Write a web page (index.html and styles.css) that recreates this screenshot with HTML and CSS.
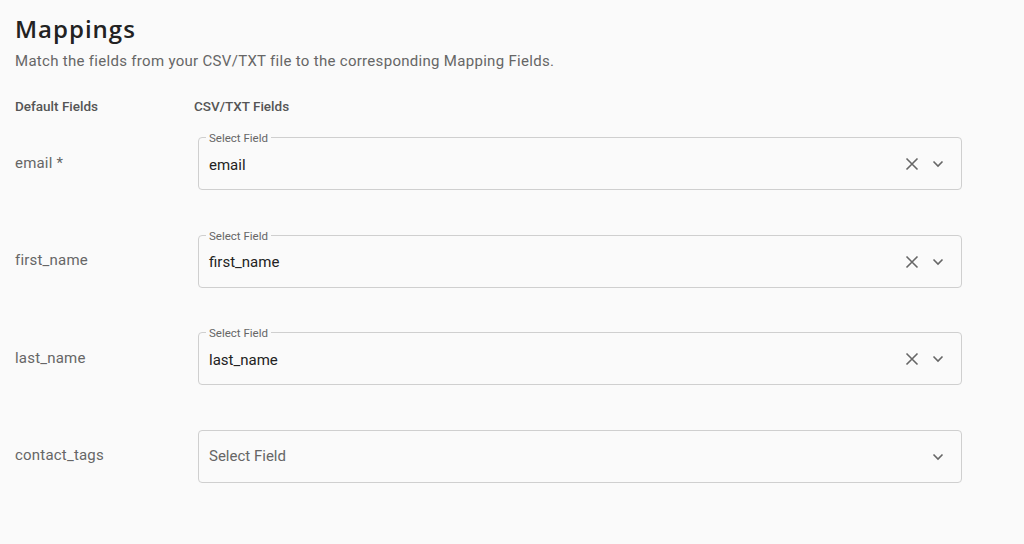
FILE: index.html
```html
<!DOCTYPE html>
<html>
<head>
<meta charset="utf-8">
<link rel="stylesheet" href="styles.css">
</head>
<body>
<div class="page">
  <h1 class="title">Mappings</h1>
  <p class="subtitle">Match the fields from your CSV/TXT file to the corresponding Mapping Fields.</p>
  <div class="heads">
    <div class="head">Default Fields</div>
    <div class="head">CSV/TXT Fields</div>
  </div>
  <div class="grid">
    <div class="label">email *</div>
    <div class="select">
      <span class="legend">Select Field</span>
      <span class="value">email</span>
      <svg class="clear" width="14" height="14" viewBox="0 0 14 14"><path d="M1.5 1.5 L12.5 12.5 M12.5 1.5 L1.5 12.5" stroke="#666" stroke-width="1.6" fill="none"/></svg>
      <svg class="chev" width="12" height="8" viewBox="0 0 12 8"><path d="M1.5 1.5 L6 6 L10.5 1.5" stroke="#666" stroke-width="1.6" fill="none"/></svg>
    </div>

    <div class="label">first_name</div>
    <div class="select">
      <span class="legend">Select Field</span>
      <span class="value">first_name</span>
      <svg class="clear" width="14" height="14" viewBox="0 0 14 14"><path d="M1.5 1.5 L12.5 12.5 M12.5 1.5 L1.5 12.5" stroke="#666" stroke-width="1.6" fill="none"/></svg>
      <svg class="chev" width="12" height="8" viewBox="0 0 12 8"><path d="M1.5 1.5 L6 6 L10.5 1.5" stroke="#666" stroke-width="1.6" fill="none"/></svg>
    </div>

    <div class="label">last_name</div>
    <div class="select">
      <span class="legend">Select Field</span>
      <span class="value">last_name</span>
      <svg class="clear" width="14" height="14" viewBox="0 0 14 14"><path d="M1.5 1.5 L12.5 12.5 M12.5 1.5 L1.5 12.5" stroke="#666" stroke-width="1.6" fill="none"/></svg>
      <svg class="chev" width="12" height="8" viewBox="0 0 12 8"><path d="M1.5 1.5 L6 6 L10.5 1.5" stroke="#666" stroke-width="1.6" fill="none"/></svg>
    </div>

    <div class="label">contact_tags</div>
    <div class="select">
      <span class="value placeholder">Select Field</span>
      <svg class="chev" width="12" height="8" viewBox="0 0 12 8"><path d="M1.5 1.5 L6 6 L10.5 1.5" stroke="#666" stroke-width="1.6" fill="none"/></svg>
    </div>
  </div>
</div>
</body>
</html>
```
FILE: styles.css
```css
html, body {
  margin: 0;
  padding: 0;
  background: #fafafa;
}
.page {
  padding: 14px 0 0 15px;
  font-family: Roboto, "Liberation Sans", sans-serif;
}
.title {
  margin: 0;
  font-family: "Open Sans", "Noto Sans", sans-serif;
  font-weight: 600;
  font-size: 24px;
  line-height: 30px;
  color: #222;
  letter-spacing: 1px;
}
.subtitle {
  margin: 7px 0 0 0;
  font-size: 15px;
  line-height: 20px;
  color: #666;
  letter-spacing: 0.3px;
}
.heads {
  margin-top: 27px;
  display: grid;
  grid-template-columns: 179px 768px;
}
.head {
  font-size: 13.5px;
  font-weight: 500;
  line-height: 16px;
  color: #555;
}
.grid {
  margin-top: 23px;
  display: grid;
  grid-template-columns: 179px 768px;
  align-items: center;
  row-gap: 44.5px;
}
.label {
  font-size: 15px;
  letter-spacing: 0.2px;
  color: #666;
  margin-top: -2px;
}
.select {
  position: relative;
  margin-left: 4px;
  height: 53px;
  box-sizing: border-box;
  border: 1px solid #cfcfcf;
  border-radius: 4px;
  display: flex;
  align-items: center;
  padding: 0 17px 0 10px;
}
.legend {
  position: absolute;
  top: -7px;
  left: 7px;
  padding: 0 3px;
  background: #fafafa;
  font-size: 11.5px;
  line-height: 14px;
  color: #666;
}
.value {
  flex: 1;
  font-size: 15px;
  color: #222;
  margin-top: 2px;
}
.value.placeholder {
  color: #666;
  margin-top: 0;
}
.clear {
  margin-top: 1px;
  margin-right: 13px;
}
.chev {
  margin-top: 1px;
}
```
